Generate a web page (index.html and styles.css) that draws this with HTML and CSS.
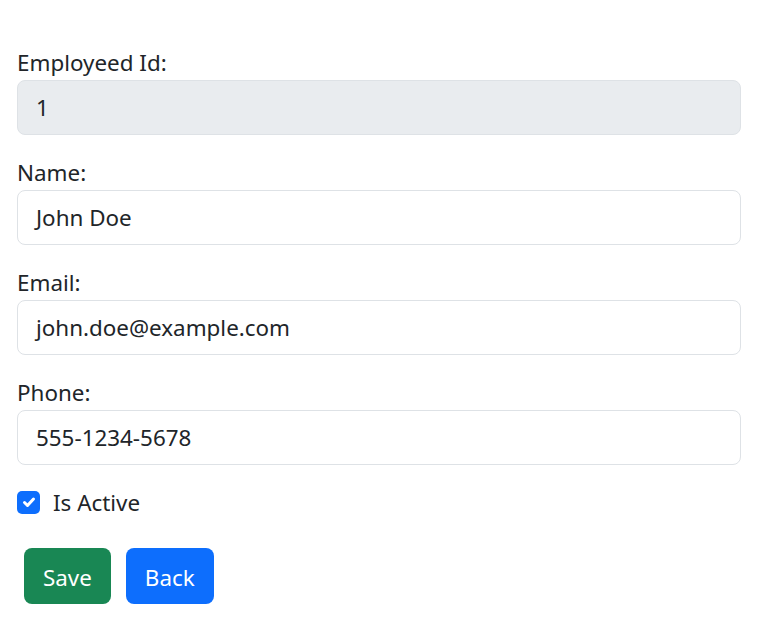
FILE: index.html
```html
<!DOCTYPE html>
<html>
<head>
<meta charset="utf-8">
<link rel="stylesheet" href="styles.css">
</head>
<body>
<form class="form">
  <div class="field">
    <label class="label">Employeed Id:</label>
    <div class="input disabled">1</div>
  </div>
  <div class="field">
    <label class="label">Name:</label>
    <div class="input">John Doe</div>
  </div>
  <div class="field">
    <label class="label">Email:</label>
    <div class="input">john.doe@example.com</div>
  </div>
  <div class="field">
    <label class="label">Phone:</label>
    <div class="input">555-1234-5678</div>
  </div>
  <div class="check">
    <span class="box"><svg width="20" height="20" viewBox="0 0 20 20"><path d="M5.5 10.5l3 3l6-6.5" fill="none" stroke="#fff" stroke-width="3" stroke-linecap="round" stroke-linejoin="round"/></svg></span>
    <span>Is Active</span>
  </div>
  <div class="buttons">
    <span class="btn save">Save</span>
    <span class="btn back">Back</span>
  </div>
</form>
</body>
</html>
```
FILE: styles.css
```css
html, body { margin: 0; padding: 0; background: #fff; }
body {
  font-family: "Noto Sans", "Open Sans", sans-serif;
  font-size: 22.4px;
  color: #212529;
}
.form {
  padding: 50px 23px 0 17px;
  display: flex;
  flex-direction: column;
}
.field { display: flex; flex-direction: column; margin-bottom: 25px; }
.label { line-height: 26px; height: 26px; padding-bottom: 4px; }
.input {
  box-sizing: border-box;
  height: 55px;
  border: 1px solid #dee2e6;
  border-radius: 8px;
  padding: 1px 18px 0;
  display: flex;
  align-items: center;
  line-height: 30px;
}
.disabled { background: #e9ecef; }
.check {
  display: flex;
  align-items: center;
  gap: 13px;
  height: 24px;
}
.box {
  width: 23px; height: 23px;
  box-sizing: border-box;
  border-radius: 5px;
  background: #0d6efd;
  display: flex; align-items: center; justify-content: center;
}
.buttons {
  display: flex;
  gap: 15px;
  margin-top: 34px;
  padding-left: 7px;
}
.btn {
  box-sizing: border-box;
  color: #fff;
  height: 56px;
  border-radius: 8px;
  padding: 3px 19px 0;
  display: flex;
  align-items: center;
  line-height: 30px;
}
.save { background: #198754; }
.back { background: #0d6efd; }
```
